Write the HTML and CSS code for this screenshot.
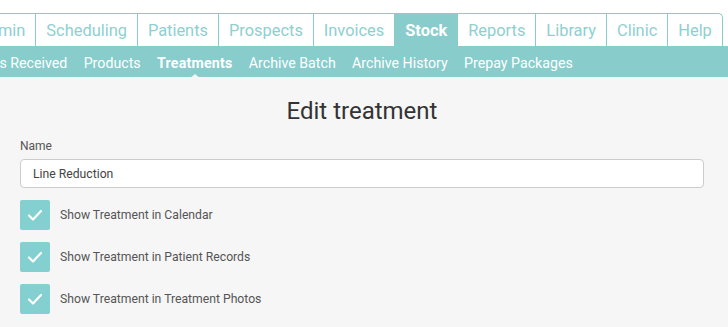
FILE: index.html
```html
<!DOCTYPE html>
<html lang="en">
<head>
    <meta charset="UTF-8">
    <meta name="viewport" content="width=device-width, initial-scale=1.0">
    <title>Edit treatment</title>
    <link rel="stylesheet" href="styles.css">
</head>
<body>
    <div class="tabs">
        <a class="tab first" href="#">Admin</a>
        <a class="tab" href="#">Scheduling</a>
        <a class="tab" href="#">Patients</a>
        <a class="tab" href="#">Prospects</a>
        <a class="tab" href="#">Invoices</a>
        <a class="tab active" href="#">Stock</a>
        <a class="tab" href="#">Reports</a>
        <a class="tab" href="#">Library</a>
        <a class="tab" href="#">Clinic</a>
        <a class="tab last" href="#">Help</a>
    </div>
    <div class="subnav">
        <a class="sub first" href="#">Items Received</a>
        <a class="sub" href="#">Products</a>
        <a class="sub active" href="#">Treatments</a>
        <a class="sub" href="#">Archive Batch</a>
        <a class="sub" href="#">Archive History</a>
        <a class="sub" href="#">Prepay Packages</a>
    </div>
    <div class="content">
        <h1>Edit treatment</h1>
        <label class="field-label" for="name">Name</label>
        <input class="field" id="name" type="text" value="Line Reduction">
        <div class="check-row">
            <span class="check"><svg viewBox="0 0 30 30"><path d="M9 15.5l4 4 8-8.5"/></svg></span>
            <span>Show Treatment in Calendar</span>
        </div>
        <div class="check-row">
            <span class="check"><svg viewBox="0 0 30 30"><path d="M9 15.5l4 4 8-8.5"/></svg></span>
            <span>Show Treatment in Patient Records</span>
        </div>
        <div class="check-row">
            <span class="check"><svg viewBox="0 0 30 30"><path d="M9 15.5l4 4 8-8.5"/></svg></span>
            <span>Show Treatment in Treatment Photos</span>
        </div>
    </div>
</body>
</html>
```
FILE: styles.css
```css
body {
    margin: 0;
    font-family: Roboto, 'Liberation Sans', sans-serif;
    background: #f6f6f6;
    overflow: hidden;
}
.tabs {
    display: flex;
    background: white;
    padding-top: 13px;
    overflow: hidden;
}
.tab {
    display: block;
    padding: 0 10px;
    height: 32px;
    line-height: 33px;
    font-size: 16.4px;
    color: #8ed0d0;
    text-decoration: none;
    border-top: 1px solid #88cccc;
    border-left: 1px solid #88cccc;
    white-space: nowrap;
    flex-shrink: 0;
}
.tab.first {
    margin-left: -33px;
}
.tab.active {
    background: #88cccc;
    color: white;
    font-weight: bold;
}
.tab.last {
    border-right: 1px solid #88cccc;
    border-top-right-radius: 5px;
}
.subnav {
    display: flex;
    background: #88cccc;
    height: 31px;
    box-sizing: border-box;
    padding-top: 3px;
    align-items: center;
    white-space: nowrap;
    overflow: hidden;
}
.sub {
    color: white;
    font-size: 14.2px;
    text-decoration: none;
    margin-right: 16.4px;
    position: relative;
    flex-shrink: 0;
}
.sub.first {
    margin-left: -29px;
}
.sub.active {
    font-weight: bold;
    letter-spacing: 0.2px;
}
.sub.active::after {
    content: '';
    position: absolute;
    left: 50%;
    margin-left: -6px;
    bottom: -8px;
    border: 6px solid transparent;
    border-top: 0;
    border-bottom: 5px solid #f6f6f6;
}
.content {
    padding: 0 24px 0 20px;
}
h1 {
    margin: 20px 0 14px;
    text-align: center;
    font-size: 24px;
    font-weight: normal;
    color: #333;
}
.field-label {
    display: block;
    font-size: 12px;
    color: #555;
    margin-bottom: 6px;
}
.field {
    display: block;
    box-sizing: border-box;
    width: 100%;
    height: 29px;
    padding: 0 12px;
    border: 1px solid #cccccc;
    border-radius: 4px;
    background: white;
    font-family: inherit;
    font-size: 12.2px;
    color: #444;
    margin-bottom: 12px;
}
.check-row {
    display: flex;
    align-items: center;
    gap: 10px;
    font-size: 12.2px;
    color: #555;
    margin-bottom: 12px;
}
.check {
    width: 30px;
    height: 30px;
    border-radius: 2px;
    background: #84cfd0;
    display: flex;
}
.check svg {
    width: 30px;
    height: 30px;
    fill: none;
    stroke: white;
    stroke-width: 2.2;
    stroke-linecap: round;
    stroke-linejoin: round;
}
```
